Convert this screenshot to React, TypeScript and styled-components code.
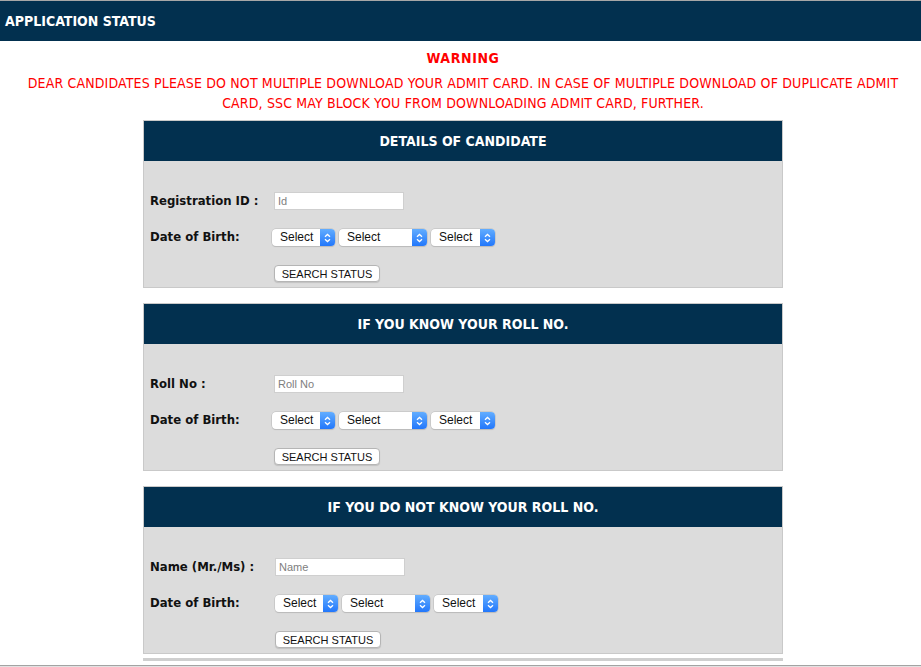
import styled, { createGlobalStyle } from 'styled-components';

const GlobalStyle = createGlobalStyle`
  html, body {
    margin: 0;
    padding: 0;
    background: #ffffff;
    font-family: "DejaVu Sans Condensed", "DejaVu Sans", sans-serif;
  }
`;

const Page = styled.div`
  width: 921px;
  height: 667px;
  overflow: hidden;
  display: flex;
  flex-direction: column;
`;

const TopBar = styled.div`
  border-top: 1px solid #a7a7a7;
  background: #02304f;
  height: 40px;
  display: flex;
  align-items: center;
  padding-left: 5px;
  color: #ffffff;
  font-weight: bold;
  font-size: 14px;
  flex-shrink: 0;
`;

const Content = styled.div`
  flex: 1;
  padding-left: 5px;
  display: flex;
  flex-direction: column;
  align-items: center;
  overflow: hidden;
`;

const Warning = styled.div`
  color: #ff0000;
  text-align: center;
  font-size: 14px;
  line-height: 20px;
  padding: 7px 0 7px;
`;

const WarningTitle = styled.div`
  font-weight: bold;
  letter-spacing: 0.6px;
  margin-bottom: 5px;
`;

const WarningText = styled.div`
  padding: 0 10px;
  letter-spacing: 0.15px;
`;

const Panel = styled.div`
  width: 638px;
  border: 1px solid #c9c9c9;
  background: #dcdcdc;
  margin-bottom: 15px;
  flex-shrink: 0;
`;

const PanelHeader = styled.div`
  height: 40px;
  background: #02304f;
  color: #ffffff;
  font-weight: bold;
  font-size: 14px;
  display: flex;
  align-items: center;
  justify-content: center;
`;

const PanelBody = styled.div`
  padding: 31px 6px 5px;
  display: flex;
  flex-direction: column;
  gap: 19px;
`;

const Row = styled.div<{ $labelWidth: number; $height: number }>`
  display: grid;
  grid-template-columns: ${(p) => p.$labelWidth}px 1fr;
  align-items: center;
  height: ${(p) => p.$height}px;
`;

const Label = styled.div`
  font-weight: bold;
  font-size: 13px;
  color: #111111;
  white-space: nowrap;
  position: relative;
  top: -1px;
`;

const TextInput = styled.input`
  width: 130px;
  height: 18px;
  box-sizing: border-box;
  border: 1px solid #cfcfcf;
  background: #ffffff;
  padding: 0 3px;
  font-family: "Liberation Sans", Arial, sans-serif;
  font-size: 11px;
  outline: none;
  &::placeholder {
    color: #7e7e7e;
  }
`;

const SelectGroup = styled.div`
  display: flex;
  gap: 4px;
`;

const FakeSelect = styled.div<{ $width: number }>`
  width: ${(p) => p.$width}px;
  height: 17px;
  box-sizing: border-box;
  display: flex;
  border-radius: 4px;
  background: #ffffff;
  box-shadow: 0 0 0 0.5px #b9b9b9, 0 1px 1px rgba(0, 0, 0, 0.15);
  overflow: hidden;
  font-family: "Liberation Sans", Arial, sans-serif;
  font-size: 12px;
  color: #111111;
`;

const SelectText = styled.span`
  flex: 1;
  padding-left: 8px;
  line-height: 17px;
`;

const SelectArrow = styled.span`
  width: 15px;
  display: flex;
  align-items: center;
  justify-content: center;
  background: linear-gradient(#62adff, #2277fb);
`;

const SearchButton = styled.button`
  width: 106px;
  height: 17px;
  box-sizing: border-box;
  padding: 0;
  border: 1px solid #b5b5b5;
  border-radius: 4px;
  background: #ffffff;
  box-shadow: 0 1px 1px rgba(0, 0, 0, 0.12);
  font-family: "Liberation Sans", Arial, sans-serif;
  font-size: 11px;
  color: #111111;
`;

const TailBar = styled.div`
  width: 640px;
  height: 3px;
  background: #cfcfcf;
  margin-top: -11px;
  flex-shrink: 0;
`;

const BottomLine = styled.div`
  height: 1px;
  background: #a3a3a3;
  border-bottom: 1px solid #e2e2e2;
  flex-shrink: 0;
`;

const Chevrons = () => (
  <svg width="7" height="10" viewBox="0 0 7 10">
    <path d="M1 3.8 L3.5 1.5 L6 3.8 M1 6.2 L3.5 8.5 L6 6.2" fill="none" stroke="#ffffff" strokeWidth="1.3" />
  </svg>
);

const Select = ({ width }: { width: number }) => (
  <FakeSelect $width={width}>
    <SelectText>Select</SelectText>
    <SelectArrow>
      <Chevrons />
    </SelectArrow>
  </FakeSelect>
);

type SectionProps = {
  title: string;
  label: string;
  placeholder: string;
  labelWidth: number;
  selectWidth: number;
};

const Section = ({ title, label, placeholder, labelWidth, selectWidth }: SectionProps) => (
  <Panel>
    <PanelHeader>{title}</PanelHeader>
    <PanelBody>
      <Row $labelWidth={labelWidth} $height={18}>
        <Label>{label}</Label>
        <TextInput placeholder={placeholder} />
      </Row>
      <Row $labelWidth={selectWidth} $height={17}>
        <Label>Date of Birth:</Label>
        <SelectGroup>
          <Select width={63} />
          <Select width={88} />
          <Select width={64} />
        </SelectGroup>
      </Row>
      <Row $labelWidth={labelWidth} $height={17}>
        <span />
        <SearchButton>SEARCH STATUS</SearchButton>
      </Row>
    </PanelBody>
  </Panel>
);

const App = () => {
  return (
    <Page>
      <GlobalStyle />
      <TopBar>APPLICATION STATUS</TopBar>
      <Content>
        <Warning>
          <WarningTitle>WARNING</WarningTitle>
          <WarningText>
            DEAR CANDIDATES PLEASE DO NOT MULTIPLE DOWNLOAD YOUR ADMIT CARD. IN CASE OF MULTIPLE DOWNLOAD OF DUPLICATE ADMIT
            CARD, SSC MAY BLOCK YOU FROM DOWNLOADING ADMIT CARD, FURTHER.
          </WarningText>
        </Warning>
        <Section title="DETAILS OF CANDIDATE" label="Registration ID :" placeholder="Id" labelWidth={124} selectWidth={122} />
        <Section title="IF YOU KNOW YOUR ROLL NO." label="Roll No :" placeholder="Roll No" labelWidth={124} selectWidth={122} />
        <Section title="IF YOU DO NOT KNOW YOUR ROLL NO." label="Name (Mr./Ms) :" placeholder="Name" labelWidth={125} selectWidth={125} />
        <TailBar />
      </Content>
      <BottomLine />
    </Page>
  );
};

export default App;
